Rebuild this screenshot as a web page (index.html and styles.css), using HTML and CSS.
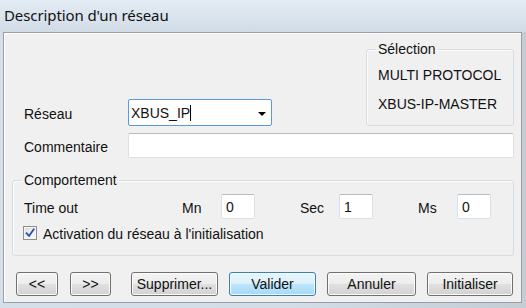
FILE: index.html
```html
<!DOCTYPE html>
<html lang="fr">
<head>
<meta charset="utf-8">
<title>Description d'un réseau</title>
<link rel="stylesheet" href="styles.css">
</head>
<body>
<div class="window">
  <div class="titlebar"><span class="title">Description d'un réseau</span></div>
  <div class="panel">
    <div class="top">
      <div class="left">
        <div class="row">
          <span class="lbl">Réseau</span>
          <div class="combo"><span class="combo-text">XBUS_IP<span class="caret"></span></span><span class="arrow"></span></div>
        </div>
      </div>
      <fieldset class="group group-sel">
        <legend>Sélection</legend>
        <div class="sel-item">MULTI PROTOCOL</div>
        <div class="sel-item second">XBUS-IP-MASTER</div>
      </fieldset>
    </div>
    <div class="row row-comment">
      <span class="lbl">Commentaire</span>
      <div class="textbox wide"></div>
    </div>
    <fieldset class="group group-comp">
      <legend>Comportement</legend>
      <div class="timeout">
        <span class="lbl-to">Time out</span>
        <span class="unit">Mn</span><div class="textbox small">0</div><span></span>
        <span class="unit">Sec</span><div class="textbox small">1</div><span></span>
        <span class="unit">Ms</span><div class="textbox small">0</div>
      </div>
      <div class="check-row">
        <span class="checkbox"><svg width="10" height="10" viewBox="0 0 10 10"><path d="M1.5 5.2 L4 8 L8.8 1.2" fill="none" stroke="#2a4fa8" stroke-width="1.8" stroke-linejoin="round" stroke-linecap="round"/></svg></span>
        <span class="check-label">Activation du réseau à l'initialisation</span>
      </div>
    </fieldset>
    <div class="buttons">
      <button class="btn nav">&lt;&lt;</button>
      <button class="btn nav nav2">&gt;&gt;</button>
      <button class="btn act first">Supprimer...</button>
      <button class="btn act default">Valider</button>
      <button class="btn act wider">Annuler</button>
      <button class="btn act last">Initialiser</button>
    </div>
  </div>
</div>
</body>
</html>
```
FILE: styles.css
```css
* { box-sizing: border-box; }
html, body { margin: 0; padding: 0; }
body {
  width: 526px;
  height: 308px;
  overflow: hidden;
  background: #c9d2db;
  font-family: "Liberation Sans", Arial, sans-serif;
  font-size: 14px;
  color: #111;
}
.window {
  height: 308px;
  background: linear-gradient(to right, #d5dfe9 0%, #d3dde7 55%, #c4ccd4 100%);
}
.titlebar {
  height: 32px;
  display: flex;
  align-items: center;
  padding-left: 4px;
  padding-bottom: 3px;
  background: linear-gradient(to bottom, #e3ebf3 0%, #d9e3ed 60%, #d1dbe5 100%);
}
.title {
  font-family: "Noto Sans", "Open Sans", sans-serif;
  font-size: 15px;
  color: #111;
  letter-spacing: -0.1px;
}
.panel {
  margin-left: 3px;
  width: 519px;
  background: #f0f0f0;
  border: 1px solid #9a9fa5;
  box-shadow: inset 1px 1px 0 #fff;
  padding: 9px 7px 6px 8px;
}
.top {
  display: grid;
  grid-template-columns: 354px 148px;
  align-items: end;
}
.row {
  display: flex;
  align-items: center;
  padding-left: 12px;
}
.lbl {
  width: 104px;
  padding-top: 2px;
}
.combo {
  width: 144px;
  height: 27px;
  background: #fff;
  border: 1px solid #5b9bd5;
  border-radius: 2px;
  display: flex;
  align-items: center;
  justify-content: space-between;
  padding: 0 5px 0 2px;
}
.combo-text { display: flex; align-items: center; }
.caret {
  display: inline-block;
  width: 1px;
  height: 16px;
  background: #000;
}
.arrow {
  width: 0;
  height: 0;
  border-left: 4px solid transparent;
  border-right: 4px solid transparent;
  border-top: 4px solid #000;
  margin-top: 2px;
}
.group {
  margin: 0;
  border: 1px solid #d3dce4;
  border-radius: 3px;
  box-shadow: inset 1px 1px 0 #fbfbfb;
  min-width: 0;
}
.group legend {
  padding: 0 2px;
  margin-left: -2px;
  line-height: 14px;
  font-size: 14px;
}
.group-sel {
  padding: 11px 8px 13px 11px;
}
.sel-item { line-height: 16px; }
.sel-item.second { margin-top: 13px; }
.row-comment { margin-top: 7px; }
.textbox {
  height: 25px;
  background: #fff;
  border: 1px solid #dbe0e6;
  border-top-color: #b6bcc4;
  border-radius: 2px;
  padding-left: 4px;
  display: flex;
  align-items: center;
}
.textbox.wide { flex: 1; }
.textbox.small { width: 34px; height: 25px; }
.group-comp {
  margin-top: 15px;
  padding: 7px 8px 14px 11px;
}
.timeout {
  display: grid;
  grid-template-columns: 158px 39px 34px 45px 39px 34px 45px 39px 34px;
  align-items: center;
  height: 25px;
}
.lbl-to, .unit { padding-top: 3px; }
.check-row {
  display: flex;
  align-items: center;
  margin-top: 6px;
  height: 16px;
}
.checkbox {
  width: 14px;
  height: 14px;
  margin-left: -1px;
  border: 1px solid #8e8f8f;
  background: linear-gradient(135deg, #dcdcdc 0%, #f2f2f2 60%, #fbfbfb 100%);
  box-shadow: inset 0 0 0 1px #f4f4f4;
  display: flex;
  align-items: center;
  justify-content: center;
}
.check-label { margin-left: 6px; padding-top: 2px; }
.buttons {
  display: flex;
  margin-top: 16px;
  padding-left: 4px;
  gap: 11px;
}
.btn {
  height: 24px;
  margin: 0;
  padding: 0;
  border: 1px solid #707070;
  border-radius: 3px;
  background: linear-gradient(to bottom, #f4f4f4 0%, #ececec 50%, #e0e0e0 51%, #d2d2d2 100%);
  box-shadow: inset 0 0 0 1px #fbfbfb;
  font-family: "Liberation Sans", Arial, sans-serif;
  font-size: 14px;
  color: #111;
  text-align: center;
}
.btn.nav { width: 42px; }
.btn.nav2 { width: 41px; margin-left: 1px; }
.btn.act { width: 87px; }
.btn.act.first { margin-left: 9px; }
.btn.act.wider { width: 89px; }
.btn.act.last { width: 86px; }
.btn.default {
  border-color: #3c7fb1;
  background: linear-gradient(to bottom, #eaf6fd 0%, #d9f0fc 50%, #bee6fd 51%, #a7d9f5 100%);
  box-shadow: inset 0 0 0 1px #f2fbff;
}
```
